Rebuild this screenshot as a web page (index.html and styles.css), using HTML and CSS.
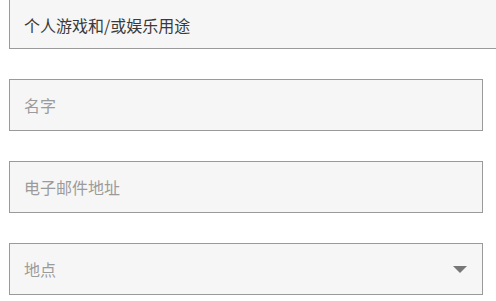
FILE: index.html
```html
<!DOCTYPE html>
<html>
<head>
<meta name="viewport" content="width=device-width, initial-scale=1">
<link rel="stylesheet" href="styles.css">
</head>
<body>
<div class="form">
  <div class="field wide">
    <span class="value">个人游戏和/或娱乐用途</span>
  </div>
  <div class="field">
    <span class="placeholder">名字</span>
  </div>
  <div class="field">
    <span class="placeholder">电子邮件地址</span>
  </div>
  <div class="field select">
    <span class="placeholder">地点</span>
    <svg class="caret" width="14" height="7" viewBox="0 0 14 7"><polygon points="0,0 14,0 7,7" fill="#777"/></svg>
  </div>
</div>
</body>
</html>
```
FILE: styles.css
```css
body {
  margin: 0;
  background: #ffffff;
  overflow: hidden;
  font-family: 'Noto Sans CJK SC', 'Noto Sans', sans-serif;
}

.form {
  display: flex;
  flex-direction: column;
  gap: 30px;
  padding-left: 9px;
  margin-top: -2px;
}

.field {
  box-sizing: border-box;
  width: 474px;
  height: 52px;
  border: 1px solid #9a9a9a;
  background: #f6f6f6;
  display: flex;
  align-items: center;
  justify-content: space-between;
  padding: 0 15px 0 14px;
  font-size: 16px;
}

.wide {
  width: 520px;
  height: 51px;
  padding-top: 2px;
}

.value {
  color: #3a3a3a;
}

.placeholder {
  color: #9b9b9b;
}

.caret {
  display: block;
}
```
